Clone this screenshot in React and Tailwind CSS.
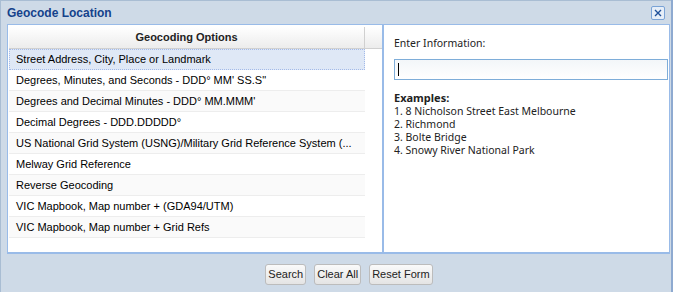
import React from "react";

const rows = [
  "Street Address, City, Place or Landmark",
  "Degrees, Minutes, and Seconds - DDD° MM' SS.S\"",
  "Degrees and Decimal Minutes - DDD° MM.MMM'",
  "Decimal Degrees - DDD.DDDDD°",
  "US National Grid System (USNG)/Military Grid Reference System (...",
  "Melway Grid Reference",
  "Reverse Geocoding",
  "VIC Mapbook, Map number + (GDA94/UTM)",
  "VIC Mapbook, Map number + Grid Refs",
];

export default function App() {
  return (
    <div className="w-[673px] h-[292px] bg-[#cedae7] border-l border-r-2 border-l-[#a9bdd3] border-r-[#8eaad0] flex flex-col overflow-hidden" style={{ fontFamily: "'Liberation Sans', Arial, sans-serif" }}>
      <div className="h-[24px] flex items-center justify-between pl-[6px] pr-[6px] border-t border-[#a9bdd3]">
        <span className="text-[12px] font-bold text-[#15428b]">Geocode Location</span>
        <div className="w-[14px] h-[14px] border border-[#7aa3d6] bg-[#e6eef8] rounded-[2px] flex items-center justify-center">
          <svg width="10" height="10" viewBox="0 0 10 10">
            <path d="M2 2 L8 8 M8 2 L2 8" stroke="#1d4f9a" strokeWidth="1.4" />
          </svg>
        </div>
      </div>
      <div className="ml-[6px] mr-[1px] h-[230px] bg-white border border-[#99bbe8] border-b-2 border-b-[#99bbe8] flex">
        <div className="w-[374px] pl-[1px] pt-[2px]">
          <div className="flex h-[22px] border-b border-[#d0d0d0] bg-gradient-to-b from-[#ffffff] to-[#ececec]">
            <div className="w-[356px] flex items-center justify-center text-[11px] font-bold text-[#222] border-r border-[#d0d0d0]">Geocoding Options</div>
            <div className="flex-1" />
          </div>
          <div className="w-[356px]">
            {rows.map((r, i) => (
              <div
                key={i}
                className={
                  i === 0
                    ? "h-[21px] flex items-center pl-[6px] text-[11px] text-black bg-[#dfe8f6] border border-dotted border-[#a3bae9]"
                    : `h-[21px] flex items-center pl-[7px] text-[11px] text-black border-b border-[#ededed] ${i % 2 === 0 ? "bg-[#fafafa]" : "bg-white"}`
                }
              >
                <span className="whitespace-nowrap">{r}</span>
              </div>
            ))}
          </div>
        </div>
        <div className="w-[2px] bg-[#99bbe8]" />
        <div className="flex-1 pl-[10px] pr-[1px] pt-[12px]" style={{ fontFamily: "'Noto Sans', 'Open Sans', sans-serif" }}>
          <div className="text-[10.5px] text-[#222] leading-[13px]">Enter Information:</div>
          <div className="mt-[9px] h-[21px] border border-[#7eadd9] bg-gradient-to-b from-[#f3f6f9] to-white flex items-center pl-[3px]">
            <div className="w-[1px] h-[13px] bg-black" />
          </div>
          <div className="mt-[11px] text-[10.5px] leading-[13px] text-[#222]">
            <div className="font-bold text-[11px] leading-[14px]">Examples:</div>
            <div>1. 8 Nicholson Street East Melbourne</div>
            <div>2. Richmond</div>
            <div>3. Bolte Bridge</div>
            <div>4. Snowy River National Park</div>
          </div>
        </div>
      </div>
      <div className="flex justify-center gap-[8px] pt-[10px] pl-[26px]">
        {["Search", "Clear All", "Reset Form"].map((b) => (
          <div key={b} className="h-[21px] px-[2px] flex items-center text-[11px] text-[#222] border border-[#bcbcbc] rounded-[3px] bg-gradient-to-b from-[#fafafa] to-[#e4e4e4]">
            {b}
          </div>
        ))}
      </div>
    </div>
  );
}
